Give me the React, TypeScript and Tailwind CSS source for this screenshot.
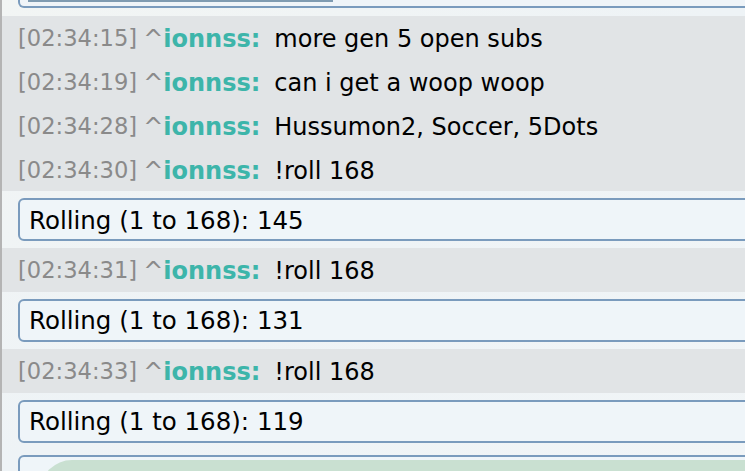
const feed = [
  {
    lines: [
      { time: "02:34:15", text: "more gen 5 open subs" },
      { time: "02:34:19", text: "can i get a woop woop" },
      { time: "02:34:28", text: "Hussumon2, Soccer, 5Dots" },
      { time: "02:34:30", text: "!roll 168" },
    ],
    result: "Rolling (1 to 168): 145",
  },
  {
    lines: [{ time: "02:34:31", text: "!roll 168" }],
    result: "Rolling (1 to 168): 131",
  },
  {
    lines: [{ time: "02:34:33", text: "!roll 168" }],
    result: "Rolling (1 to 168): 119",
  },
];

function ChatLine({ time, text }: { time: string; text: string }) {
  return (
    <div className="flex h-[43.75px] items-center whitespace-nowrap pl-4 pt-[3px] text-[24px]">
      <span className="text-[22.6px] text-[#8a8a8a]">[{time}]</span>
      <span className="ml-[6px] text-[#8a8a8a]">^</span>
      <span className="font-bold text-[#3db5aa]">ionnss:</span>
      <span className="ml-[14px] text-black">{text}</span>
    </div>
  );
}

export default function App() {
  return (
    <div
      className="h-[471px] w-[745px] overflow-hidden border-l-2 border-[#b4b4b4] bg-gradient-to-br from-[#f2f5f4] via-[#eef3f6] to-[#f1f5f7]"
      style={{ fontFamily: '"DejaVu Sans", Verdana, sans-serif' }}
    >
      <div className="h-4 overflow-hidden">
        <div className="-mt-[12px] ml-4 h-[20px] w-[800px] rounded-b-md border-2 border-t-0 border-[#7a9bbd] bg-[#eff4f8]">
          <div className="ml-[8px] h-[14px] w-[305px] border-b-2 border-[#7f9bb1]" />
        </div>
      </div>

      {feed.map((group, i) => (
        <div key={i}>
          <div className="bg-[#dfe3e5]/95">
            {group.lines.map((line) => (
              <ChatLine key={line.time} time={line.time} text={line.text} />
            ))}
          </div>
          <div className="py-[7px] pl-4">
            <div className="flex h-[43px] w-[800px] items-center whitespace-nowrap rounded-md border-2 border-[#7a9bbd] bg-[#eff5f9] pl-[9px] pt-[3px] text-[24.5px] text-black">
              {group.result}
            </div>
          </div>
        </div>
      ))}

      <div className="mt-[5px] pl-4">
        <div className="h-[40px] w-[800px] rounded-t-md border-2 border-b-0 border-[#7a9bbd] bg-[#eff5f9] pl-[20px] pt-[3px]">
          <div className="h-full w-full rounded-tl-[32px] bg-[#c9e0d1]" />
        </div>
      </div>
    </div>
  );
}
